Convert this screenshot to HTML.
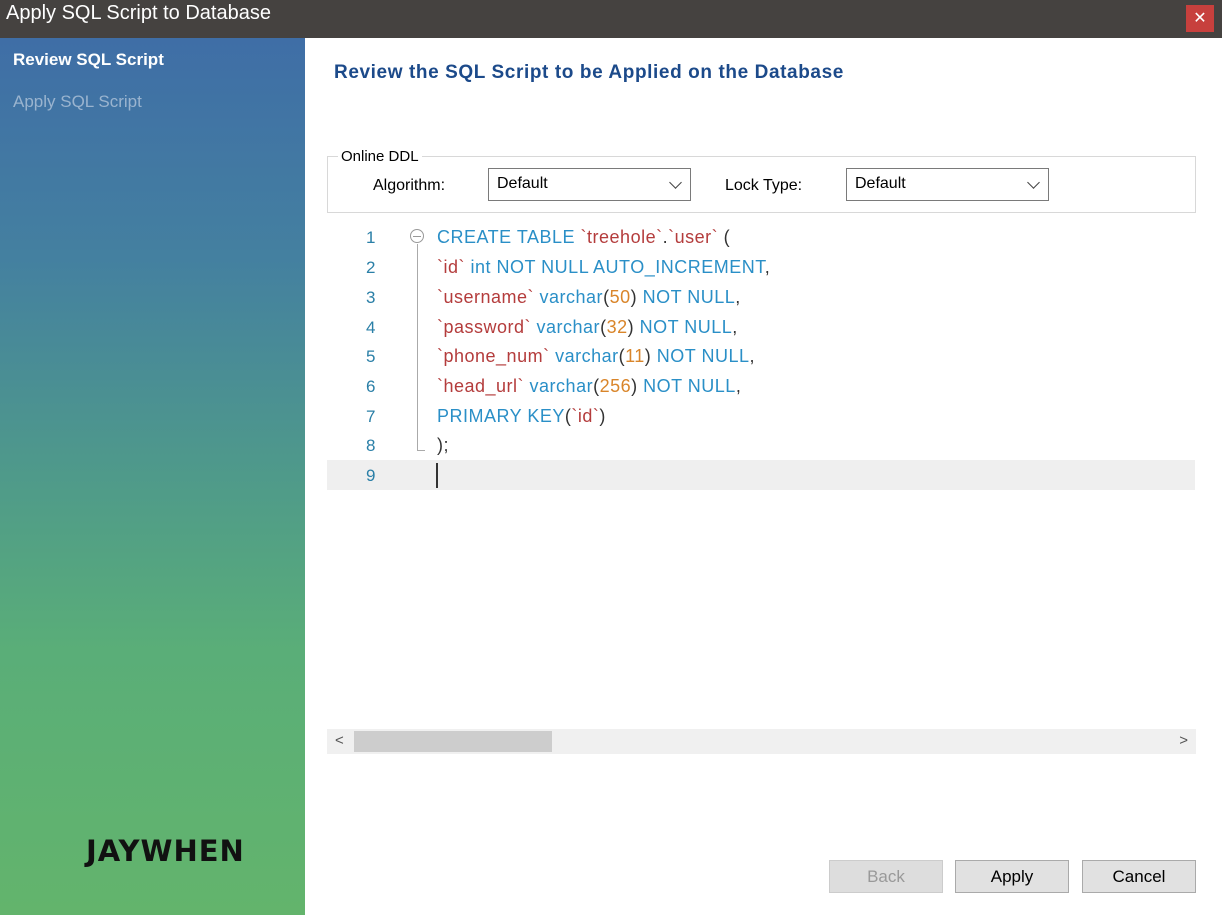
<!DOCTYPE html>
<html><head><style>
*{margin:0;padding:0;box-sizing:border-box}
body{width:1222px;height:923px;background:#fff;position:relative;overflow:hidden;font-family:"Liberation Sans",sans-serif}
.title{position:absolute;left:0;top:0;width:1222px;height:38px;background:#454240;color:#fff;font-size:20px;padding:2px 0 0 6px}
.close{position:absolute;right:8px;top:5px;width:28px;height:27px;background:#c7403d;color:#fff;font-size:16px;text-align:center;line-height:27px}
.side{position:absolute;left:0;top:38px;width:305px;height:877px;background:linear-gradient(180deg,#3f6ea6 0%,#4480a0 25%,#4f9a8a 50%,#5aae78 70%,#63b46c 100%)}
.side .a{position:absolute;left:13px;top:12px;color:#fff;font-weight:bold;font-size:17px}
.side .b{position:absolute;left:13px;top:54px;color:#9ab4cf;font-size:17px}
.logo{position:absolute;left:86px;top:796px;font-size:29px;font-weight:bold;color:#111;letter-spacing:1px;font-family:"DejaVu Sans",sans-serif}
h1{position:absolute;left:334px;top:62px;font-size:19px;color:#1c4a8a;font-weight:bold;letter-spacing:0.6px}
.grp{position:absolute;left:327px;top:156px;width:869px;height:57px;border:1px solid #d8d8d8}
.grp .lg{position:absolute;left:10px;top:-9px;background:#fff;padding:0 3px;font-size:15px}
.lbl{position:absolute;font-size:16px}
.sel{position:absolute;width:203px;height:33px;border:1px solid #7a7a7a;font-size:16px;padding:6px 8px;background:#fff}
.sel::after{content:"";position:absolute;right:10px;top:9px;width:8px;height:8px;border-right:1.5px solid #444;border-bottom:1.5px solid #444;transform:rotate(45deg)}
.code{position:absolute;left:327px;top:222px;font-size:18px}
.ln{position:absolute;left:366px;color:#2a7fa7;font-size:17px}
.cl{position:absolute;left:437px;color:#2a8fc7;white-space:pre;letter-spacing:0.5px}
.s{color:#b43c3c}.n{color:#d9852a}.k{color:#2a8fc7}.p{color:#333}
.scroll{position:absolute;left:327px;top:729px;width:869px;height:25px;background:#f0f0f0}
.btn{position:absolute;top:860px;width:114px;height:33px;border:1px solid #aaa;background:#e1e1e1;font-size:17px;text-align:center;line-height:31px}
</style></head><body>
<div class="title">Apply SQL Script to Database<div class="close">✕</div></div>
<div class="side"><div class="a">Review SQL Script</div><div class="b">Apply SQL Script</div>
<div class="logo">JAYWHEN</div></div>
<h1>Review the SQL Script to be Applied on the Database</h1>
<div class="grp"><div class="lg">Online DDL</div>
<div class="lbl" style="left:45px;top:20px">Algorithm:</div>
<div class="sel" style="left:160px;top:11px">Default</div>
<div class="lbl" style="left:397px;top:20px">Lock Type:</div>
<div class="sel" style="left:518px;top:11px">Default</div></div>
<div style="position:absolute;left:327px;top:460px;width:868px;height:30px;background:#efefef"></div>
<div style="position:absolute;left:436px;top:463px;width:2px;height:25px;background:#333"></div>
<div style="position:absolute;left:410px;top:229px;width:14px;height:14px;border:1px solid #999;border-radius:50%"></div>
<div style="position:absolute;left:413px;top:236px;width:8px;height:1px;background:#999"></div>
<div style="position:absolute;left:417px;top:244px;width:1px;height:206px;background:#aaa"></div>
<div style="position:absolute;left:417px;top:450px;width:8px;height:1px;background:#aaa"></div>
<div class="code">
<div class="ln" style="top:6px;left:39px">1</div><div class="ln" style="top:36px;left:39px">2</div><div class="ln" style="top:66px;left:39px">3</div><div class="ln" style="top:96px;left:39px">4</div><div class="ln" style="top:125px;left:39px">5</div><div class="ln" style="top:155px;left:39px">6</div><div class="ln" style="top:185px;left:39px">7</div><div class="ln" style="top:214px;left:39px">8</div><div class="ln" style="top:244px;left:39px">9</div>
<div class="cl" style="top:5px;left:110px">CREATE TABLE <span class="s">`treehole`</span><span class="p">.</span><span class="s">`user`</span> <span class="p">(</span></div>
<div class="cl" style="top:35px;left:110px"><span class="s">`id`</span> int NOT NULL AUTO_INCREMENT<span class="p">,</span></div>
<div class="cl" style="top:65px;left:110px"><span class="s">`username`</span> varchar<span class="p">(</span><span class="n">50</span><span class="p">)</span> NOT NULL<span class="p">,</span></div>
<div class="cl" style="top:95px;left:110px"><span class="s">`password`</span> varchar<span class="p">(</span><span class="n">32</span><span class="p">)</span> NOT NULL<span class="p">,</span></div>
<div class="cl" style="top:124px;left:110px"><span class="s">`phone_num`</span> varchar<span class="p">(</span><span class="n">11</span><span class="p">)</span> NOT NULL<span class="p">,</span></div>
<div class="cl" style="top:154px;left:110px"><span class="s">`head_url`</span> varchar<span class="p">(</span><span class="n">256</span><span class="p">)</span> NOT NULL<span class="p">,</span></div>
<div class="cl" style="top:184px;left:110px">PRIMARY KEY<span class="p">(</span><span class="s">`id`</span><span class="p">)</span></div>
<div class="cl" style="top:213px;left:110px"><span class="p">);</span></div>
</div>
<div class="scroll"><div style="position:absolute;left:27px;top:2px;width:198px;height:21px;background:#cdcdcd"></div>
<div style="position:absolute;left:8px;top:3px;font-size:15px;color:#555">&lt;</div><div style="position:absolute;right:8px;top:3px;font-size:15px;color:#555">&gt;</div></div>
<div class="btn" style="left:829px;color:#999;background:#ddd;border-color:#ccc">Back</div>
<div class="btn" style="left:955px">Apply</div>
<div class="btn" style="left:1082px">Cancel</div>
</body></html>
